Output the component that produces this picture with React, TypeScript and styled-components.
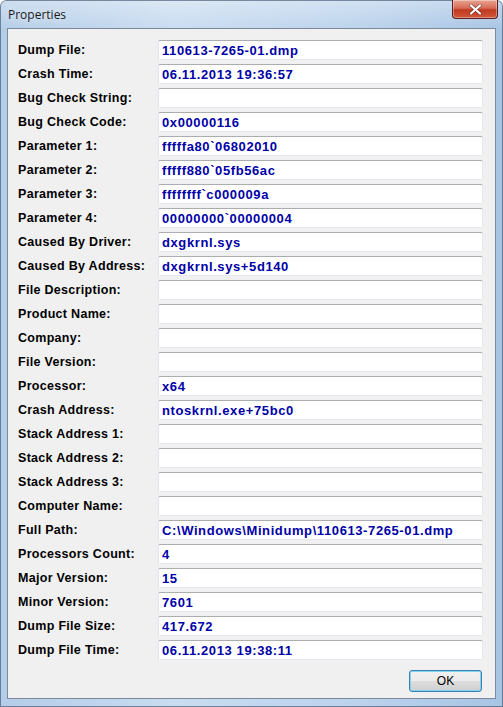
import React from 'react';
import styled, { createGlobalStyle } from 'styled-components';

const GlobalStyle = createGlobalStyle`
  html, body {
    margin: 0;
    padding: 0;
    background: #ffffff;
  }
`;

// Aero glass window frame
const Frame = styled.div`
  width: 503px;
  height: 707px;
  box-sizing: border-box;
  display: flex;
  flex-direction: column;
  padding: 0 7px 8px 7px;
  background:
    linear-gradient(180deg, rgba(255, 255, 255, 0.35) 0%, rgba(255, 255, 255, 0) 30px),
    linear-gradient(90deg, #b4cde8 0%, #c9dcf0 35%, #bcd3ec 70%, #a8c4e4 100%);
  border-radius: 6px 6px 0 0;
  box-shadow: inset 0 0 0 1px rgba(40, 60, 90, 0.55);
`;

const TitleBar = styled.div`
  height: 28px;
  flex: none;
  display: flex;
  align-items: flex-start;
  justify-content: space-between;
`;

const Title = styled.span`
  margin-top: 6px;
  margin-left: 1px;
  font-family: 'Open Sans', 'Noto Sans', sans-serif;
  font-size: 12px;
  color: #1a1a1a;
  text-shadow: 0 0 8px rgba(255, 255, 255, 0.9);
`;

const CloseButton = styled.div`
  width: 46px;
  height: 19px;
  margin-right: -2px;
  display: flex;
  align-items: center;
  justify-content: center;
  box-sizing: border-box;
  border: 1px solid #5a2020;
  border-top: none;
  border-radius: 0 0 4px 4px;
  background: linear-gradient(180deg, #e8a493 0%, #d76b55 45%, #c0391f 55%, #d2573b 100%);
  box-shadow: inset 0 0 0 1px rgba(255, 255, 255, 0.35);
`;

const Client = styled.div`
  flex: 1;
  display: flex;
  flex-direction: column;
  background: #f0f0f0;
  border: 1px solid #7a8a9c;
  padding: 11px 12px 0 10px;
`;

const Grid = styled.div`
  display: grid;
  grid-template-columns: 140px 1fr;
  grid-auto-rows: 20px;
  row-gap: 4px;
  align-items: center;
`;

const Label = styled.span`
  font-family: 'Liberation Sans', Arial, sans-serif;
  font-weight: bold;
  font-size: 12.5px;
  letter-spacing: 0.3px;
  color: #000000;
`;

const Field = styled.div`
  height: 20px;
  box-sizing: border-box;
  background: #ffffff;
  border: 1px solid #e3e9ef;
  border-top-color: #abadb3;
  border-left-color: #e2e3ea;
  border-radius: 2px;
  padding: 0 3px;
  display: flex;
  align-items: center;
  font-family: 'Liberation Sans', Arial, sans-serif;
  font-weight: bold;
  font-size: 13px;
  letter-spacing: 0.6px;
  color: #0000a8;
  white-space: nowrap;
  overflow: hidden;
`;

const Footer = styled.div`
  display: flex;
  justify-content: flex-end;
  padding-top: 10px;
`;

const OkButton = styled.button`
  width: 73px;
  height: 22px;
  margin-right: 1px;
  border: 1px solid #3c7fb1;
  border-radius: 3px;
  background: linear-gradient(180deg, #f2f2f2 0%, #ebebeb 50%, #dddddd 51%, #cfcfcf 100%);
  box-shadow: inset 0 0 0 1px #7fd4f5;
  font-family: 'Liberation Sans', Arial, sans-serif;
  font-size: 12px;
  color: #000000;
  padding: 0;
`;

const rows: [string, string][] = [
  ['Dump File:', '110613-7265-01.dmp'],
  ['Crash Time:', '06.11.2013 19:36:57'],
  ['Bug Check String:', ''],
  ['Bug Check Code:', '0x00000116'],
  ['Parameter 1:', 'fffffa80`06802010'],
  ['Parameter 2:', 'fffff880`05fb56ac'],
  ['Parameter 3:', 'ffffffff`c000009a'],
  ['Parameter 4:', '00000000`00000004'],
  ['Caused By Driver:', 'dxgkrnl.sys'],
  ['Caused By Address:', 'dxgkrnl.sys+5d140'],
  ['File Description:', ''],
  ['Product Name:', ''],
  ['Company:', ''],
  ['File Version:', ''],
  ['Processor:', 'x64'],
  ['Crash Address:', 'ntoskrnl.exe+75bc0'],
  ['Stack Address 1:', ''],
  ['Stack Address 2:', ''],
  ['Stack Address 3:', ''],
  ['Computer Name:', ''],
  ['Full Path:', 'C:\\Windows\\Minidump\\110613-7265-01.dmp'],
  ['Processors Count:', '4'],
  ['Major Version:', '15'],
  ['Minor Version:', '7601'],
  ['Dump File Size:', '417.672'],
  ['Dump File Time:', '06.11.2013 19:38:11'],
];

const App: React.FC = () => {
  return (
    <>
      <GlobalStyle />
      <Frame>
        <TitleBar>
          <Title>Properties</Title>
          <CloseButton>
            <svg width="13" height="11" viewBox="0 0 13 11">
              <path
                d="M2 1.5 L11 9.5 M11 1.5 L2 9.5"
                stroke="#3a1a14"
                strokeWidth="3.6"
                strokeLinecap="round"
                opacity="0.5"
              />
              <path
                d="M2 1.5 L11 9.5 M11 1.5 L2 9.5"
                stroke="#ffffff"
                strokeWidth="2.2"
                strokeLinecap="round"
              />
            </svg>
          </CloseButton>
        </TitleBar>
        <Client>
          <Grid>
            {rows.map(([label, value]) => (
              <React.Fragment key={label}>
                <Label>{label}</Label>
                <Field>{value}</Field>
              </React.Fragment>
            ))}
          </Grid>
          <Footer>
            <OkButton>OK</OkButton>
          </Footer>
        </Client>
      </Frame>
    </>
  );
};

export default App;
